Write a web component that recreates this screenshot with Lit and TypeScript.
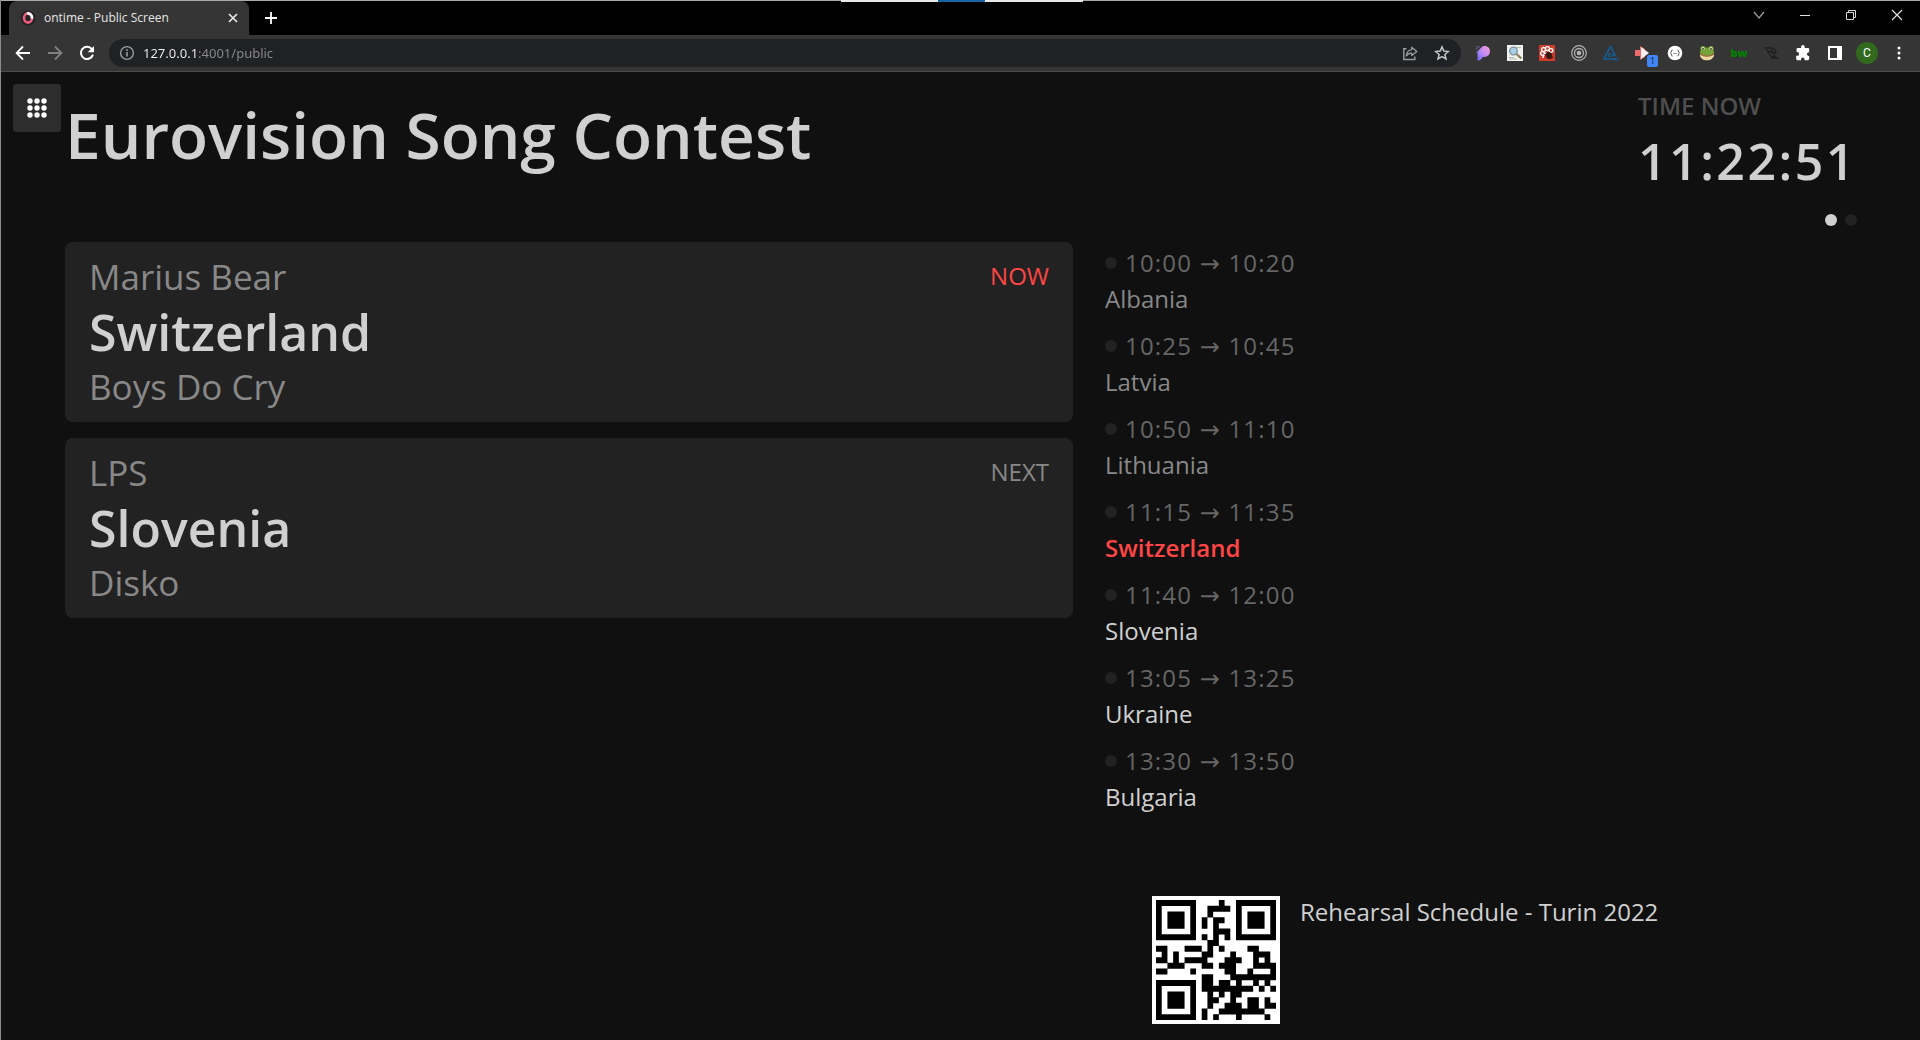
import { LitElement, html, css, svg } from "lit";
import { customElement, property } from "lit/decorators.js";

interface Entry {
  start: string;
  end: string;
  name: string;
  state: "past" | "now" | "future";
}

const ENTRIES: Entry[] = [
  { start: "10:00", end: "10:20", name: "Albania", state: "past" },
  { start: "10:25", end: "10:45", name: "Latvia", state: "past" },
  { start: "10:50", end: "11:10", name: "Lithuania", state: "past" },
  { start: "11:15", end: "11:35", name: "Switzerland", state: "now" },
  { start: "11:40", end: "12:00", name: "Slovenia", state: "future" },
  { start: "13:05", end: "13:25", name: "Ukraine", state: "future" },
  { start: "13:30", end: "13:50", name: "Bulgaria", state: "future" },
];

const QR_ROWS = [
  "#######....#..#######",
  "#.....#..####.#.....#",
  "#.###.#..#....#.###.#",
  "#.###.#.#.##..#.###.#",
  "#.###.#.#.#...#.###.#",
  "#.....#...###.#.....#",
  "#######.#.#.#.#######",
  ".........##..........",
  "##...###.#.#....##...",
  ".#.#....##...#...###.",
  "##.#.####...###..#.#.",
  "..###...##.###...####",
  "##....#.....##..#...#",
  "........##...########",
  "#######.##.##.#..#.#.",
  "#.....#.#########.#.#",
  "#.###.#..#.#.##......",
  "#.###.#..##..#..##.#.",
  "#.###.#..#..###.##.##",
  "#.....#.#..########..",
  "#######.#.#...#....#.",
];

const glyph = (body: unknown, size = 16, box = "0 0 16 16") =>
  html`<svg width=${size} height=${size} viewBox=${box} aria-hidden="true">${body}</svg>`;

const ICONS = {
  favicon: svg`<circle cx="8" cy="8" r="7.5" fill="#242426"/>
    <ellipse cx="8" cy="8" rx="4" ry="4.6" fill="none" stroke="#f0607c" stroke-width="2.6"/>
    <path d="M7 3.5A4 4.6 0 0 1 12 8.6" fill="none" stroke="#fff" stroke-width="2.6"/>`,
  close: svg`<path d="M4 4l8 8M12 4l-8 8" stroke="#e8e8e8" stroke-width="1.7" fill="none"/>`,
  plus: svg`<path d="M8 2v12M2 8h12" stroke="#fff" stroke-width="1.8" fill="none"/>`,
  back: svg`<path d="M15 8H2M8 1.5L1.6 8 8 14.5" stroke="#fff" stroke-width="1.8" fill="none"/>`,
  forward: svg`<path d="M1 8h13M8 1.5L14.4 8 8 14.5" stroke="#808080" stroke-width="1.8" fill="none"/>`,
  reload: svg`<path d="M12.9 4.2A6.1 6.1 0 1 0 13.9 9.6" stroke="#fff" stroke-width="2" fill="none"/><path d="M15 1v6.3H8.7z" fill="#fff"/>`,
  info: svg`<circle cx="8" cy="8" r="6.4" fill="none" stroke="#9a9da1" stroke-width="1.4"/><path d="M8 7v4.5M8 4.3v1.6" stroke="#9a9da1" stroke-width="1.6"/>`,
  share: svg`<path d="M4.5 3.8H1.8v10.7h11V11.5" fill="none" stroke="#9a9da1" stroke-width="1.4"/><path d="M9.8 2.2l5 4.2-5 4.2V8.2C7.3 8.2 5.6 9 4.2 11c.4-3.4 2.2-5.9 5.600-6.400z" fill="none" stroke="#9a9da1" stroke-width="1.3" stroke-linejoin="round"/>`,
  star: svg`<path d="M8 1.900l1.800 4.200 4.600.4-3.500 3 1.100 4.500L8 11.600 4 14l1.100-4.500-3.500-3 4.600-.4z" fill="none" stroke="#c3c5c8" stroke-width="1.500"/>`,
  chevron: svg`<path d="M3 5l5 6 5-6" stroke="#9a9a9a" stroke-width="1.300" fill="none"/>`,
  minimise: svg`<path d="M3 8.500h10" stroke="#e0e0e0" stroke-width="1"/>`,
  restore: svg`<path d="M3.500 5.500h7v7h-7zM5.500 5.500v-2h7v7h-2" stroke="#d8d8d8" fill="none"/>`,
  windowClose: svg`<path d="M3 3l10 10M13 3L3 13" stroke="#e0e0e0" stroke-width="1.200"/>`,
  grid: svg`${[3, 10, 17].flatMap((y) => [3, 10, 17].map((x) => svg`<circle cx=${x} cy=${y} r="2.700" fill="#fff"/>`))}`,
};

const EXTENSIONS: { label: string; body: unknown }[] = [
  {
    label: "Image picker",
    body: svg`<defs><linearGradient id="pg" x1="0" y1="1" x2="1" y2="0"><stop offset="0" stop-color="#6a6cf6"/><stop offset=".5" stop-color="#c58cf5"/><stop offset="1" stop-color="#f49ad0"/></linearGradient></defs>
      <path d="M2.500 7L8.500 1H9.500C13 1 15 3.300 15 6.300 15 9.800 12.500 12 9.500 12H7.500C7 14 5.500 15.500 2.500 15.500z" fill="url(#pg)"/>
      <path d="M1 4.500L4.500 1M1.500 7.500L8 1M1 1.800L1.800 1" stroke="#8a70b8" stroke-width="1"/>`,
  },
  {
    label: "Page search",
    body: svg`<rect width="16" height="16" fill="#f2f2f0"/><path d="M2 12.500h5M9 2.500h5M2 14h8" stroke="#b9bfb0"/><circle cx="6.500" cy="6" r="3.800" fill="#a8cfe2" stroke="#7d93a0" stroke-width="1.300"/><path d="M9.500 9l4.800 4.500" stroke="#8a7f58" stroke-width="2.200"/>`,
  },
  {
    label: "Bug reporter",
    body: svg`<rect width="16" height="16" fill="#d23c2c"/><circle cx="4.500" cy="4.500" r="2" fill="none" stroke="#fff" stroke-width="1.300"/><circle cx="8.500" cy="3.600" r="2" fill="none" stroke="#fff" stroke-width="1.300"/><circle cx="12" cy="5.500" r="1.900" fill="none" stroke="#fff" stroke-width="1.300"/><circle cx="3.500" cy="8.500" r="1.900" fill="none" stroke="#fff" stroke-width="1.300"/><path d="M4 13c0-3 2-5 4-5" stroke="#fff" stroke-width="1.400" fill="none"/><ellipse cx="10" cy="10.500" rx="3" ry="3.800" fill="#3a1512" transform="rotate(-25 10 10.500)"/><path d="M5.500 9.500l9 3M6.500 13l7-5" stroke="#3a1512"/>`,
  },
  {
    label: "Target",
    body: svg`<g fill="none" stroke="#b4b4b4"><circle cx="8" cy="8" r="7.300" stroke-width="1.200"/><circle cx="8" cy="8" r="4.500" stroke-width="1.300"/></g><circle cx="8" cy="8" r="2.300" fill="#b4b4b4"/>`,
  },
  {
    label: "Angular tools",
    body: svg`<path d="M12 14H1L7.500 1.500l5 9.500" fill="none" stroke="#13609c" stroke-width="1.500"/><circle cx="13.800" cy="14" r="1.500" fill="none" stroke="#13609c"/><path d="M5.500 8.500v3h1.800v-3zM9 8.500l2 3M11 8.500l-2 3" fill="none" stroke="#13609c" stroke-width=".9"/>`,
  },
  {
    label: "Redirect recorder",
    body: svg`<path d="M0 5h5V1l5 3v8l-5 3v-4H0z" fill="#ee6a6a"/><path d="M6 2l8 6-8 6z" fill="#fff0f0"/>`,
  },
  {
    label: "JSON viewer",
    body: svg`<circle cx="8" cy="8" r="7.300" fill="#fff"/><path d="M5.500 5C3.800 5 5 7.500 3.500 8 5 8.500 3.800 11 5.500 11M10.500 5c1.700 0 .5 2.500 2 3-1.500.5-.3 3-2 3" fill="none" stroke="#444"/><path d="M6.500 8.500h3" stroke="#444" stroke-dasharray="1 1"/>`,
  },
  {
    label: "Frog",
    body: svg`<circle cx="4" cy="3.500" r="2.600" fill="#76a23a"/><circle cx="12" cy="3.500" r="2.600" fill="#76a23a"/><ellipse cx="8" cy="7.500" rx="7" ry="5" fill="#76a23a"/><path d="M.8 9.500Q8 13 15.200 9.500C15 13 12 15.300 8 15.300S1 13 .8 9.500z" fill="#e9d7a4"/><path d="M1.500 9.500Q8 13 14.500 9.500" stroke="#b84a3a" fill="none"/><circle cx="4" cy="3.600" r="1.500" fill="#e8f2c8"/><circle cx="12" cy="3.600" r="1.500" fill="#e8f2c8"/><circle cx="4" cy="3.800" r=".9" fill="#222"/><circle cx="12" cy="3.800" r=".9" fill="#222"/>`,
  },
  { label: "BW", body: null },
  {
    label: "Disabled recorder",
    body: svg`<path d="M1 3h8.500v3.500H5L4 4.500M9.500 4.500c3.500-1 4.500 2 2 4M5 7l3 4.500h4M8 7.500h3.500V11L14.500 13H8" stroke="#1f1f1f" stroke-width="1.300" fill="none"/>`,
  },
  {
    label: "Extensions",
    body: svg`<path d="M6.300 1.800a1.800 1.800 0 0 1 3.600 0V3h3.200c.8 0 1.300.5 1.300 1.300V7h-.6a1.900 1.900 0 0 0 0 3.800h1v3c0 .8-.6 1.400-1.400 1.400H10v-.8a1.800 1.800 0 0 0-3.600 0v.8H3.200c-.8 0-1.400-.6-1.400-1.400v-2.900h.8a1.900 1.900 0 0 0 0-3.700h-.8V4.300C1.800 3.500 2.400 3 3.200 3h3.100z" fill="#fff" transform="matrix(-1 0 0 1 16 0)"/>`,
  },
  {
    label: "Side panel",
    body: svg`<rect x="1" y="1" width="14" height="14" fill="#fff"/><rect x="3" y="3" width="7" height="10" fill="#353535"/>`,
  },
];

@customElement("browser-chrome")
export class BrowserChrome extends LitElement {
  static styles = css`
    :host {
      display: block;
      background: #000;
      font-family: "Segoe UI", "Noto Sans", sans-serif;
      color: #fff;
      border-top: 1px solid #a8acac;
    }
    button {
      display: grid;
      place-items: center;
      flex: none;
      border: 0;
      padding: 0;
      background: none;
      color: inherit;
      font: inherit;
    }
    svg {
      display: block;
    }
    .strip {
      display: flex;
      align-items: flex-start;
      height: 34px;
      padding-left: 8px;
    }
    .tab {
      display: flex;
      align-items: center;
      width: 240px;
      height: 34px;
      box-sizing: border-box;
      padding: 0 8px 0 11px;
      gap: 8px;
      background: #353535;
      border-radius: 8px 8px 0 0;
      font-family: "Open Sans", sans-serif;
      font-size: 12px;
      line-height: 16px;
      color: #e6e6e6;
    }
    .tab-title {
      flex: 1;
      white-space: nowrap;
      overflow: hidden;
    }
    .new-tab {
      width: 28px;
      height: 34px;
      margin-left: 8px;
    }
    .window {
      display: flex;
      margin-left: auto;
    }
    .window button {
      width: 46px;
      height: 28px;
    }
    .toolbar {
      display: flex;
      align-items: center;
      height: 36px;
      padding: 0 7px 0 8px;
      background: #353535;
      border-bottom: 1px solid #4c4c4c;
    }
    .nav {
      display: flex;
      gap: 4px;
      margin-right: 8px;
    }
    .nav button,
    .extensions button {
      width: 28px;
      height: 28px;
    }
    .address {
      display: flex;
      align-items: center;
      flex: 1;
      height: 28px;
      padding: 0 5px 0 10px;
      gap: 4px;
      border-radius: 14px;
      background: #202124;
    }
    .address button {
      width: 28px;
      height: 28px;
    }
    .address .info {
      width: 16px;
      margin-right: 4px;
    }
    .url {
      flex: 1;
      min-width: 0;
      height: 24px;
      border: 0;
      padding: 0;
      outline: 0;
      font-family: inherit;
      font-size: 13px;
      background: linear-gradient(to right, #f4f4f4 54px, #8b8b8b 54px);
      -webkit-background-clip: text;
      background-clip: text;
      color: transparent;
    }
    .extensions {
      display: flex;
      gap: 4px;
      margin-left: 8px;
    }
    .ext {
      position: relative;
    }
    .badge {
      position: absolute;
      right: -1px;
      bottom: 0;
      width: 11px;
      border-radius: 2px;
      background: #4285f4;
      color: #14284a;
      font-size: 9px;
      line-height: 12px;
      text-align: center;
    }
    .bw {
      font-size: 11px;
      font-weight: 900;
      color: #008000;
      line-height: 16px;
    }
    .extensions .avatar {
      width: 22px;
      height: 22px;
      margin: 3px;
      border-radius: 50%;
      background: #33691e;
      font-family: Roboto, sans-serif;
      font-size: 12px;
    }
    .share-bar {
      position: absolute;
      top: 0;
      left: 50%;
      width: 242px;
      height: 2px;
      margin-left: -120px;
      background: linear-gradient(to right, #e8eae9 97px, #1764a5 97px, #1764a5 144px, #e8eae9 144px);
    }
  `;

  render() {
    return html`
      <div class="share-bar"></div>
      <div class="strip">
        <div class="tab">
          ${glyph(ICONS.favicon)}
          <span class="tab-title">ontime - Public Screen</span>
          <button aria-label="Close tab">${glyph(ICONS.close)}</button>
        </div>
        <button class="new-tab" aria-label="New tab">${glyph(ICONS.plus)}</button>
        <div class="window">
          <button aria-label="Search tabs">${glyph(ICONS.chevron)}</button>
          <button aria-label="Minimise">${glyph(ICONS.minimise)}</button>
          <button aria-label="Restore">${glyph(ICONS.restore)}</button>
          <button aria-label="Close">${glyph(ICONS.windowClose)}</button>
        </div>
      </div>
      <div class="toolbar">
        <div class="nav">
          <button aria-label="Back">${glyph(ICONS.back)}</button>
          <button aria-label="Forward">${glyph(ICONS.forward)}</button>
          <button aria-label="Reload">${glyph(ICONS.reload)}</button>
        </div>
        <div class="address">
          <button class="info" aria-label="Site information">${glyph(ICONS.info)}</button>
          <input class="url" aria-label="Address" .value=${"127.0.0.1:4001/public"} />
          <button aria-label="Share">${glyph(ICONS.share)}</button>
          <button aria-label="Bookmark">${glyph(ICONS.star)}</button>
        </div>
        <div class="extensions">
          ${EXTENSIONS.map(
            (e, i) => html`<button class="ext" aria-label=${e.label}>
              ${e.body ? glyph(e.body) : html`<span class="bw">bw</span>`}
              ${i === 5 ? html`<span class="badge">1</span>` : ""}
            </button>`
          )}
          <button class="avatar" aria-label="Profile">C</button>
          <button aria-label="Menu">
            ${glyph(svg`<g fill="#fff"><circle cx="8" cy="3" r="1.500"/><circle cx="8" cy="8" r="1.500"/><circle cx="8" cy="13" r="1.500"/></g>`)}
          </button>
        </div>
      </div>
    `;
  }
}

@customElement("title-card")
export class TitleCard extends LitElement {
  @property() presenter = "";
  @property() heading = "";
  @property() subtitle = "";
  @property() tag = "";
  @property({ type: Boolean }) live = false;

  static styles = css`
    :host {
      display: block;
    }
    .card {
      display: flex;
      justify-content: space-between;
      padding: 11px 24px;
      border-radius: 8px;
      background: #222;
      color: #888;
    }
    .line {
      font-size: 35px;
      line-height: 48px;
    }
    .heading {
      margin: 0;
      font-size: 50px;
      font-weight: 600;
      line-height: 62px;
      color: #d0d0d0;
    }
    .tag {
      font-size: 24px;
      line-height: 46px;
    }
    .tag.live {
      color: #ff4545;
    }
  `;

  render() {
    return html`<section class="card">
      <div>
        <div class="line">${this.presenter}</div>
        <h2 class="heading">${this.heading}</h2>
        <div class="line">${this.subtitle}</div>
      </div>
      <span class="tag ${this.live ? "live" : ""}">${this.tag}</span>
    </section>`;
  }
}

@customElement("app-root")
export class AppRoot extends LitElement {
  static styles = css`
    :host {
      display: flex;
      flex-direction: column;
      box-sizing: border-box;
      min-height: 100vh;
      position: relative;
      border-left: 1px solid #8c8c8c;
      background: #101010;
      color: #d0d0d0;
      font-family: "Open Sans", sans-serif;
    }
    .screen {
      flex: 1;
      display: flex;
      flex-direction: column;
      position: relative;
      padding: 17px 63px 16px 64px;
    }
    .menu {
      position: absolute;
      top: 12px;
      left: 12px;
      display: grid;
      place-items: center;
      width: 48px;
      height: 48px;
      border: 0;
      border-radius: 3px;
      padding: 0;
      background: #2d2d2d;
    }
    .header {
      display: flex;
      justify-content: space-between;
      padding-bottom: 18px;
    }
    .title {
      margin: 0;
      font-size: 64px;
      font-weight: 600;
      line-height: 92px;
    }
    .clock {
      width: 219px;
    }
    .clock-label {
      font-size: 24px;
      font-weight: 600;
      line-height: 34px;
      margin-bottom: 3px;
      color: #4e4e4e;
    }
    .clock-time {
      font-size: 50px;
      font-weight: 600;
      line-height: 70px;
      letter-spacing: 0.05em;
      white-space: nowrap;
    }
    .body {
      flex: 1;
      display: grid;
      grid-template-columns: 63fr 47fr;
      column-gap: 32px;
    }
    .cards {
      display: flex;
      flex-direction: column;
      gap: 16px;
      padding-top: 28px;
    }
    .side {
      display: flex;
      flex-direction: column;
    }
    .pager {
      display: flex;
      justify-content: flex-end;
      gap: 8px;
      margin-bottom: 19px;
    }
    .dot {
      width: 12px;
      height: 12px;
      border-radius: 50%;
      background: #222;
    }
    .dot.on {
      background: #d0d0d0;
    }
    .schedule {
      display: flex;
      flex-direction: column;
      gap: 11px;
      margin: 0;
      padding: 0;
      list-style: none;
      font-size: 24px;
      line-height: 36px;
    }
    .when {
      display: flex;
      align-items: center;
      gap: 8px;
      height: 36px;
      color: #666;
      letter-spacing: 0.05em;
    }
    .arrow {
      font-family: "DejaVu Sans", sans-serif;
      line-height: 1;
    }
    .past {
      color: #888;
    }
    .now {
      color: #ff4545;
      font-weight: 600;
    }
    .footer {
      display: flex;
      gap: 20px;
      margin-top: auto;
      padding-left: 47px;
      font-size: 24px;
      line-height: 32px;
    }
    .qr {
      display: block;
      flex: none;
      background: #fff;
      padding: 4px;
    }
  `;

  render() {
    return html`
      <browser-chrome></browser-chrome>
      <main class="screen">
        <header class="header">
          <h1 class="title">Eurovision Song Contest</h1>
          <div class="clock">
            <div class="clock-label">TIME NOW</div>
            <div class="clock-time">11:22:51</div>
          </div>
        </header>
        <div class="body">
          <div class="cards">
            <title-card presenter="Marius Bear" heading="Switzerland" subtitle="Boys Do Cry" tag="NOW" live></title-card>
            <title-card presenter="LPS" heading="Slovenia" subtitle="Disko" tag="NEXT"></title-card>
          </div>
          <div class="side">
            <div class="pager"><span class="dot on"></span><span class="dot"></span></div>
            <ul class="schedule">
              ${ENTRIES.map(
                (e) => html`<li>
                  <div class="when"><span class="dot"></span><span>${e.start} <span class="arrow">→</span> ${e.end}</span></div>
                  <div class=${e.state}>${e.name}</div>
                </li>`
              )}
            </ul>
            <div class="footer">
              <svg class="qr" width="120" height="120" viewBox="0 0 21 21" role="img" aria-label="QR code">
                <path d=${this.qrPath()} fill="#000" />
              </svg>
              <span>Rehearsal Schedule - Turin 2022</span>
            </div>
          </div>
        </div>
        <button class="menu" aria-label="Open menu">${glyph(ICONS.grid, 20, "0 0 20 20")}</button>
      </main>
    `;
  }

  // Horizontal runs of dark cells become single rectangles, so no seams show between them.
  private qrPath(): string {
    return QR_ROWS.map((row, y) =>
      [...row.matchAll(/#+/g)].map((run) => `M${run.index} ${y}h${run[0].length}v1.05h-${run[0].length}z`).join("")
    ).join("");
  }
}
